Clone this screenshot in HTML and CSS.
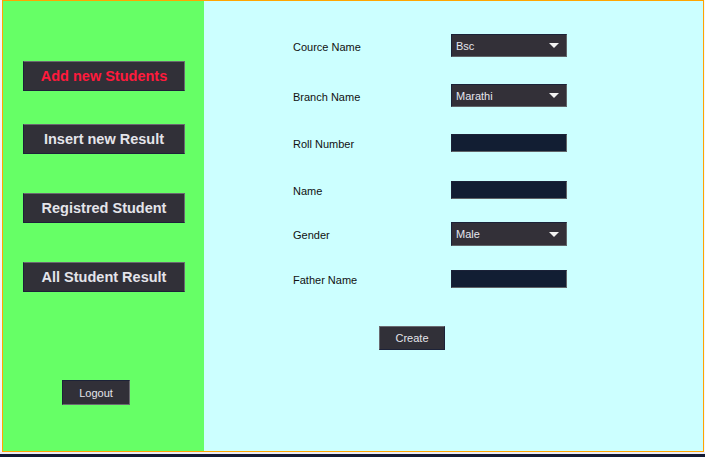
FILE: index.html
```html
<!DOCTYPE html>
<html>
<head>
<meta charset="utf-8">
<link rel="stylesheet" href="styles.css">
</head>
<body>
<div class="page">
  <div class="frame">
    <aside class="side">
      <button class="nav active">Add new Students</button>
      <button class="nav n2">Insert new Result</button>
      <button class="nav n3">Registred Student</button>
      <button class="nav n3">All Student Result</button>
      <button class="logout">Logout</button>
    </aside>
    <main class="form">
      <div class="row r1"><span class="label">Cource Name</span><div class="combo"><span>Bsc</span><i class="arrow"></i></div></div>
      <div class="row r2"><span class="label">Branch Name</span><div class="combo"><span>Marathi</span><i class="arrow"></i></div></div>
      <div class="row r3"><span class="label">Roll Number</span><div class="field"></div></div>
      <div class="row r4"><span class="label">Name</span><div class="field"></div></div>
      <div class="row r5"><span class="label">Gender</span><div class="combo tall"><span>Male</span><i class="arrow"></i></div></div>
      <div class="row r6"><span class="label">Father Name</span><div class="field"></div></div>
      <div class="actions"><button class="create">Create</button></div>
    </main>
  </div>
  <div class="strip"></div>
  <div class="bar"></div>
</div>
</body>
</html>
```
FILE: styles.css
```css
* { box-sizing: border-box; }
html, body { margin: 0; padding: 0; }
body {
  width: 705px;
  height: 457px;
  overflow: hidden;
  background: #f4f4fb;
  font-family: "Liberation Sans", Arial, sans-serif;
}
.page { width: 705px; }
.frame {
  margin-left: 2px;
  width: 702px;
  height: 452px;
  border: 1px solid #ffa500;
  border-left-width: 1px;
  display: flex;
}
.side {
  width: 201px;
  background: #66ff66;
  display: flex;
  flex-direction: column;
  align-items: flex-start;
  padding: 60px 0 0 20px;
}
.nav {
  width: 162px;
  height: 30px;
  background: #313038;
  border: 1px solid #6a6a70;
  border-left-color: #1c2238;
  border-bottom-color: #1c2238;
  color: #e4e4ea;
  font-family: "Liberation Sans", Arial, sans-serif;
  font-weight: bold;
  font-size: 14.5px;
  padding: 0;
  margin: 0;
}
.nav.active { color: #ff1a3c; }
.nav.n2 { margin-top: 33px; }
.nav.n3 { margin-top: 39px; }
.logout {
  margin: 88px 0 0 39px;
  width: 68px;
  height: 25px;
  background: #313038;
  border: 1px solid #6a6a70;
  border-left-color: #1c2238;
  border-top-color: #1c2238;
  color: #e4e4ea;
  font-family: "Liberation Sans", Arial, sans-serif;
  font-size: 11px;
  padding: 0;
}
.form {
  flex: 1;
  background: #ccffff;
  padding: 33px 0 0 89px;
}
.row {
  display: flex;
  align-items: center;
}
.label {
  width: 158px;
  font-size: 11px;
  color: #111;
  position: relative;
  top: 1px;
}
.r1 { height: 23px; }
.r2 { height: 23px; margin-top: 27px; }
.r3 { height: 18px; margin-top: 27px; }
.r4 { height: 18px; margin-top: 29px; }
.r5 { height: 24px; margin-top: 23px; }
.r6 { height: 18px; margin-top: 24px; }
.combo {
  width: 116px;
  height: 23px;
  background: #333038;
  border: 1px solid #606468;
  border-left-color: #1c2238;
  border-top-color: #1c2238;
  display: flex;
  align-items: center;
  justify-content: space-between;
  padding: 0 7px 0 4px;
  color: #e6e6ee;
  font-size: 11px;
}
.combo.tall { height: 24px; }
.arrow {
  width: 0;
  height: 0;
  border-left: 5px solid transparent;
  border-right: 5px solid transparent;
  border-top: 5px solid #f2f2f2;
}
.field {
  width: 116px;
  height: 18px;
  background: #121e33;
  border: 1px solid #606468;
  border-left-color: #1c2238;
  border-top-color: #1c2238;
}
.actions {
  margin-top: 38px;
  padding-left: 86px;
}
.create {
  width: 66px;
  height: 24px;
  background: #313038;
  border: 1px solid #6a6a70;
  border-right-color: #1c2238;
  border-bottom-color: #1c2238;
  color: #e4e4ea;
  font-family: "Liberation Sans", Arial, sans-serif;
  font-size: 11px;
  padding: 0;
}
.strip { height: 2px; background: #ececf8; }
.bar { height: 3px; background: #121a33; }
```
